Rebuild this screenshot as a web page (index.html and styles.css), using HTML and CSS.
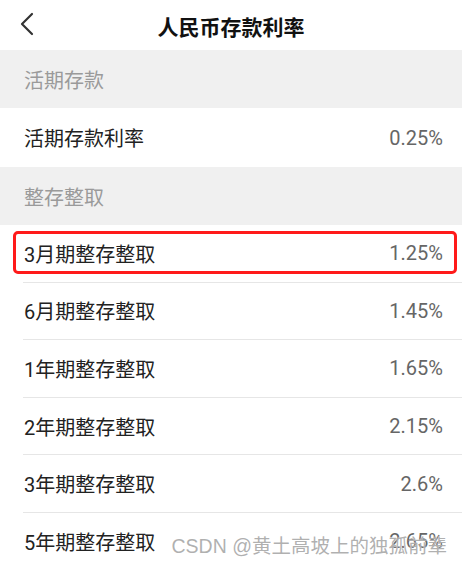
FILE: index.html
```html
<!DOCTYPE html>
<html lang="zh-CN">
  <head>
    <meta charset="UTF-8" />
    <meta name="viewport" content="width=device-width, initial-scale=1.0" />
    <title>人民币存款利率</title>
    <link rel="stylesheet" href="styles.css">
  </head>
  <body>
    <div id="page">
      <div id="nav-bar">
        <span class="back-button">
          <svg width="16" height="24" viewBox="0 0 16 24" fill="none" xmlns="http://www.w3.org/2000/svg">
            <path d="M13 2L3 12L13 22" stroke="#333" stroke-width="2.2" stroke-linecap="round" stroke-linejoin="round" />
          </svg>
        </span>
        <h1>人民币存款利率</h1>
      </div>

      <div class="section-title">活期存款</div>
      <div class="rate-row plain">
        <span class="rate-name">活期存款利率</span>
        <span class="rate-value">0.25%</span>
      </div>

      <div class="section-title">整存整取</div>
      <div class="rate-row highlighted">
        <span class="rate-name">3月期整存整取</span>
        <span class="rate-value">1.25%</span>
        <span class="mark-box"></span>
      </div>
      <div class="rate-row">
        <span class="rate-name">6月期整存整取</span>
        <span class="rate-value">1.45%</span>
      </div>
      <div class="rate-row">
        <span class="rate-name">1年期整存整取</span>
        <span class="rate-value">1.65%</span>
      </div>
      <div class="rate-row">
        <span class="rate-name">2年期整存整取</span>
        <span class="rate-value">2.15%</span>
      </div>
      <div class="rate-row">
        <span class="rate-name">3年期整存整取</span>
        <span class="rate-value">2.6%</span>
      </div>
      <div class="rate-row">
        <span class="rate-name">5年期整存整取</span>
        <span class="rate-value">2.65%</span>
      </div>

      <div class="watermark">CSDN @黄土高坡上的独孤前辈</div>
    </div>
  </body>
</html>
```

FILE: styles.css
```css
* {
  box-sizing: border-box;
  margin: 0;
  padding: 0;
}

body {
  font-family: Roboto, "Noto Sans CJK SC", sans-serif;
  background-color: #fff;
  color: #222;
  width: 462px;
  height: 570px;
  overflow: hidden;
}

#page {
  position: relative;
  height: 570px;
}

#nav-bar {
  height: 50px;
  display: flex;
  align-items: center;
  justify-content: center;
  position: relative;
}

#nav-bar h1 {
  font-size: 21px;
  font-weight: 700;
  color: #111;
  margin-top: 2px;
}

.back-button {
  position: absolute;
  left: 19px;
  top: 12px;
  display: flex;
}

.section-title {
  height: 58px;
  display: flex;
  align-items: center;
  padding-left: 24px;
  background-color: #f0f0f0;
  color: #9a9a9a;
  font-size: 20px;
}

.rate-row {
  height: 57.6px;
  display: flex;
  align-items: center;
  justify-content: space-between;
  margin-left: 23px;
  padding-left: 1px;
  padding-right: 19px;
  border-bottom: 1px solid #e6e6e6;
  font-size: 20px;
  position: relative;
}

.rate-row.plain {
  height: 59px;
  border-bottom: none;
}

.rate-name {
  color: #222;
}

.rate-value {
  color: #666;
}

.mark-box {
  position: absolute;
  left: -10px;
  right: 5px;
  top: 6px;
  bottom: 8px;
  border: 3px solid #ff1a1a;
  border-radius: 5px;
}

.watermark {
  position: absolute;
  right: 15px;
  bottom: 11px;
  font-family: "Liberation Sans", "Noto Sans CJK SC", sans-serif;
  font-size: 19.5px;
  color: rgba(150, 150, 150, 0.75);
  text-shadow: 0 0 1px #fff;
  white-space: nowrap;
}
```
